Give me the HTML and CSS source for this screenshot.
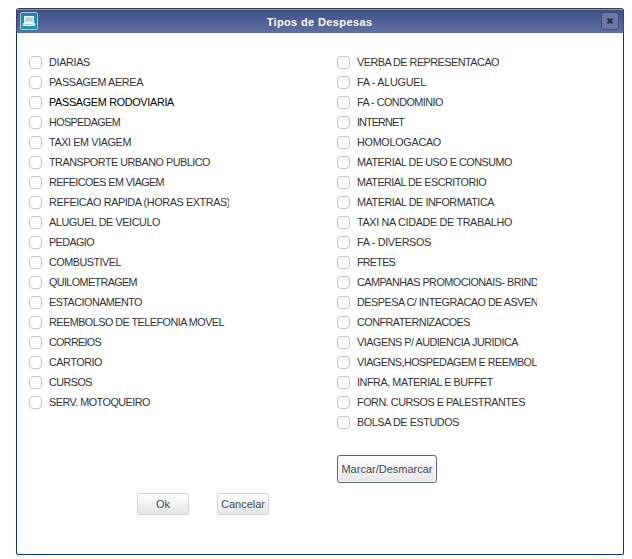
FILE: index.html
```html
<!DOCTYPE html>
<html lang="pt">
<head>
<meta charset="utf-8">
<title>Tipos de Despesas</title>
<link rel="stylesheet" href="styles.css">
</head>
<body>
<main class="window">
  <header class="titlebar">
    <svg class="app-icon" width="18" height="18" viewBox="0 0 18 18">
      <defs><linearGradient id="teal" x2="0" y2="1"><stop stop-color="#1685a4"/><stop offset="1" stop-color="#1a9cba"/></linearGradient></defs>
      <rect x=".5" y=".5" width="17" height="17" rx="1.5" fill="url(#teal)" stroke="#a4c6da"/>
      <path d="M4.5 4.5h9v6h-9z" fill="#b9d4dd" stroke="#f2f8fa"/>
      <path d="M3 11h12v3H3z" fill="#e4f1f4"/>
      <path d="M5 12.5h8" stroke="#b6cbd2"/>
    </svg>
    <h1 class="title">Tipos de Despesas</h1>
    <button class="close" aria-label="Fechar"><svg width="8" height="8" viewBox="0 0 8 8"><path d="M1.5 1.5l5 5M6.5 1.5l-5 5" stroke="#262f49" stroke-width="1.8"/></svg></button>
  </header>
  <section class="content">
    <div class="columns">
      <div class="column">
        <div class="list" id="travel"></div>
      </div>
      <div class="column">
        <div class="list" id="general"></div>
        <button class="btn toggle-all">Marcar/Desmarcar</button>
      </div>
    </div>
    <footer class="actions">
      <button class="btn">Ok</button>
      <button class="btn">Cancelar</button>
    </footer>
  </section>
</main>
<script src="script.js"></script>
</body>
</html>
```
FILE: styles.css
```css
* { box-sizing: border-box; }
body {
  margin: 0;
  padding: 8px 8px 4px 16px;
  background: #fff;
  font-family: "Liberation Sans", Arial, sans-serif;
  font-size: 11px;
  color: #333;
}
.window {
  width: 608px;
  height: 547px;
  border: 1px solid #063b66;
  border-top-color: #3c3d42;
  border-radius: 3px 3px 2px 2px;
}
.titlebar {
  display: flex;
  align-items: center;
  height: 24px;
  margin: 0 -1px;
  padding: 0 4px;
  border: 1px solid #34456f;
  border-top-color: #8493bd;
  border-bottom: 0;
  border-radius: 2px 2px 0 0;
  background: linear-gradient(#3d508c, #61709f);
}
.app-icon { flex: none; margin: -1px 0 0 -1px; }
.title {
  flex: 1;
  margin: 0;
  text-align: center;
  font-size: 11px;
  line-height: 14px;
  letter-spacing: 0.37px;
  color: #fff;
}
.close {
  display: grid;
  place-items: center;
  width: 18px;
  height: 18px;
  margin-top: -1px;
  padding: 0;
  border: 1px solid #3c4d7f;
  border-radius: 3px;
  background: #6b78a5;
}
.content { padding: 19px 12px 0; }
.columns { display: flex; gap: 108px; }
.column { width: 200px; }
label {
  display: flex;
  align-items: center;
  gap: 7px;
  height: 20px;
  white-space: nowrap;
}
.name {
  width: 180px;
  overflow: hidden;
  line-height: 14px;
}
.name span { font-size: 10.8px; }
.current { color: #000; }
input {
  appearance: none;
  flex: none;
  width: 13px;
  height: 13px;
  margin: 0;
  border: 1px solid #c3c3c3;
  border-radius: 4px;
  background: #fff;
}
.btn {
  width: 52px;
  height: 22px;
  padding: 0;
  border: 1px solid #d5d5d5;
  border-radius: 2px;
  background: linear-gradient(#fff, #e5e5e5);
  font: inherit;
  color: #4a4a52;
}
.toggle-all {
  display: block;
  width: 100px;
  height: 28px;
  margin-top: 23px;
  border-color: #5b6471;
  border-radius: 3px;
  box-shadow: inset 0 0 0 1px #fff;
}
.actions {
  display: flex;
  gap: 28px;
  padding: 10px 0 0 108px;
}
```
FILE: script.js
```js
// Each entry is an expense name and its label width in pixels.
const lists = {
  travel: [
    ["DIARIAS", 41], ["PASSAGEM AEREA", 94], ["PASSAGEM RODOVIARIA", 125],
    ["HOSPEDAGEM", 71], ["TAXI EM VIAGEM", 82], ["TRANSPORTE URBANO PUBLICO", 161],
    ["REFEICOES EM VIAGEM", 115], ["REFEICAO RAPIDA (HORAS EXTRAS)", 181],
    ["ALUGUEL DE VEICULO", 111], ["PEDAGIO", 45], ["COMBUSTIVEL", 72],
    ["QUILOMETRAGEM", 88], ["ESTACIONAMENTO", 93], ["REEMBOLSO DE TELEFONIA MOVEL", 175],
    ["CORREIOS", 52], ["CARTORIO", 53], ["CURSOS", 43], ["SERV. MOTOQUEIRO", 101]
  ],
  general: [
    ["VERBA DE REPRESENTACAO", 142], ["FA - ALUGUEL", 69], ["FA - CONDOMINIO", 86],
    ["INTERNET", 47], ["HOMOLOGACAO", 84], ["MATERIAL DE USO E CONSUMO", 155],
    ["MATERIAL DE ESCRITORIO", 129], ["MATERIAL DE INFORMATICA", 137],
    ["TAXI NA CIDADE DE TRABALHO", 155], ["FA - DIVERSOS", 74], ["FRETES", 38],
    ["CAMPANHAS PROMOCIONAIS- BRIND", 181], ["DESPESA C/ INTEGRACAO DE ASVEN", 181],
    ["CONFRATERNIZACOES", 113], ["VIAGENS P/ AUDIENCIA JURIDICA", 161],
    ["VIAGENS,HOSPEDAGEM E REEMBOL", 180], ["INFRA, MATERIAL E BUFFET", 136],
    ["FORN. CURSOS E PALESTRANTES", 168], ["BOLSA DE ESTUDOS", 102]
  ]
};

for (const [id, rows] of Object.entries(lists)) {
  const list = document.getElementById(id);
  for (const [name, width] of rows) {
    const label = document.createElement("label");
    label.innerHTML = '<input type="checkbox"><div class="name"><span></span></div>';
    const text = label.querySelector("span");
    text.textContent = name;
    if (name === "PASSAGEM RODOVIARIA") label.className = "current";
    list.append(label);
    const natural = text.getBoundingClientRect().width;
    text.style.letterSpacing = (width - natural) / name.length + "px";
  }
}
```
